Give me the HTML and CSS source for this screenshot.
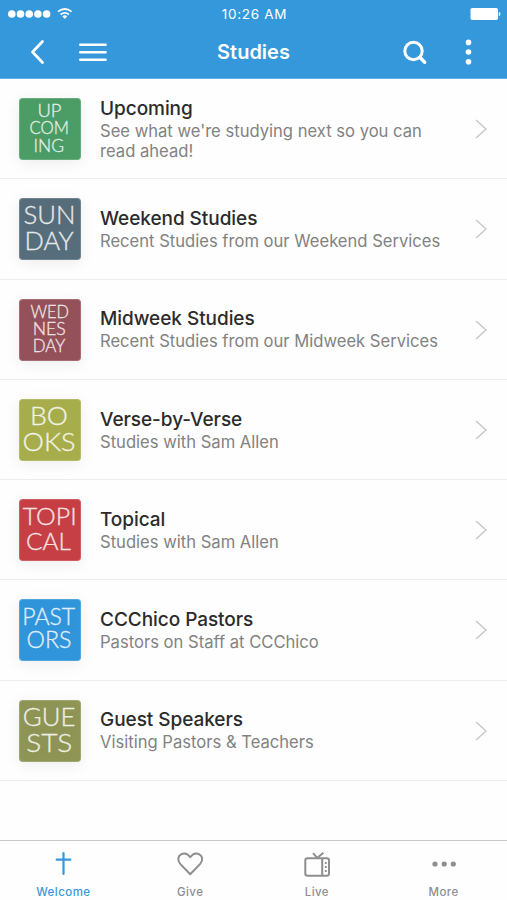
FILE: index.html
```html
<!DOCTYPE html>
<html lang="en">
<head>
<meta charset="utf-8">
<title>Studies</title>
<link rel="stylesheet" href="styles.css">
</head>
<body>
<div class="app">
  <header class="header">
    <div class="status">
      <svg class="signal" width="66" height="14" viewBox="0 0 66 14" fill="#fff"><circle cx="3.8" cy="7" r="3.8"/><circle cx="12.5" cy="7" r="3.8"/><circle cx="21.2" cy="7" r="3.8"/><circle cx="29.9" cy="7" r="3.8"/><circle cx="38.6" cy="7" r="3.8"/><g fill="none" stroke="#fff" stroke-width="1.7"><path d="M50 4.7q6.8-5.4 13.6 0M52.6 7.5q4.2-3.2 8.4 0"/></g><path d="M54.3 9.2q2.5-1.8 5 0l-2.5 2.7z"/></svg>
      <span class="time">10:26 AM</span>
      <svg class="battery" width="31" height="14" viewBox="0 0 31 14" fill="#fff"><rect x="0.5" y="1" width="27.5" height="12" rx="1.8"/><path d="M28.8 4.8q1.7.6 1.7 2.2t-1.7 2.2z"/></svg>
    </div>
    <div class="nav">
      <svg width="120" height="32" viewBox="0 0 120 32" fill="none" stroke="#fff" stroke-width="2.7" stroke-linecap="round" stroke-linejoin="round"><path d="M42.5 5.5 32.5 16l10 10.5"/><path d="M80.3 8.7h25.3M80.3 16.2h25.3M80.3 23.7h25.3" stroke-width="2.6"/></svg>
      <h1>Studies</h1>
      <svg width="120" height="32" viewBox="0 0 120 32"><circle cx="26.5" cy="15" r="8.7" fill="none" stroke="#fff" stroke-width="3"/><path d="m32.8 21.2 4.9 5" stroke="#fff" stroke-width="3.4" stroke-linecap="round"/><g fill="#fff"><circle cx="81.5" cy="6.4" r="2.8"/><circle cx="81.5" cy="16" r="2.8"/><circle cx="81.5" cy="25.8" r="2.8"/></g></svg>
    </div>
  </header>

  <main class="list">
    <a class="row">
      <svg class="tile green" viewBox="0 0 62 62"><text x="18.5" y="18.5" textLength="24" lengthAdjust="spacingAndGlyphs">UP</text><text x="10.5" y="36" textLength="39.5" lengthAdjust="spacingAndGlyphs">COM</text><text x="14.5" y="53.5" textLength="30.5" lengthAdjust="spacingAndGlyphs">ING</text></svg>
      <div class="text"><h2>Upcoming</h2><p>See what we're studying next so you can<br>read ahead!</p></div>
      <svg class="chevron" viewBox="0 0 12 20"><path d="m1 1 10 9-10 9"/></svg>
    </a>
    <a class="row">
      <svg class="tile slate large" viewBox="0 0 62 62"><text x="4.5" y="25.5" textLength="52" lengthAdjust="spacingAndGlyphs">SUN</text><text x="5.5" y="51.7" textLength="49" lengthAdjust="spacingAndGlyphs">DAY</text></svg>
      <div class="text"><h2>Weekend Studies</h2><p>Recent Studies from our Weekend Services</p></div>
      <svg class="chevron" viewBox="0 0 12 20"><path d="m1 1 10 9-10 9"/></svg>
    </a>
    <a class="row">
      <svg class="tile maroon" viewBox="0 0 62 62"><text x="11.5" y="18.5" textLength="38.5" lengthAdjust="spacingAndGlyphs">WED</text><text x="13.7" y="36" textLength="33" lengthAdjust="spacingAndGlyphs">NES</text><text x="13.7" y="53.2" textLength="32.5" lengthAdjust="spacingAndGlyphs">DAY</text></svg>
      <div class="text"><h2>Midweek Studies</h2><p>Recent Studies from our Midweek Services</p></div>
      <svg class="chevron" viewBox="0 0 12 20"><path d="m1 1 10 9-10 9"/></svg>
    </a>
    <a class="row">
      <svg class="tile lime large" viewBox="0 0 62 62"><text x="11" y="25.5" textLength="38" lengthAdjust="spacingAndGlyphs">BO</text><text x="3.5" y="52.2" textLength="53" lengthAdjust="spacingAndGlyphs">OKS</text></svg>
      <div class="text"><h2>Verse-by-Verse</h2><p>Studies with Sam Allen</p></div>
      <svg class="chevron" viewBox="0 0 12 20"><path d="m1 1 10 9-10 9"/></svg>
    </a>
    <a class="row">
      <svg class="tile red medium" viewBox="0 0 62 62"><text x="3.7" y="26" textLength="54" lengthAdjust="spacingAndGlyphs">TOPI</text><text x="7" y="50.5" textLength="45" lengthAdjust="spacingAndGlyphs">CAL</text></svg>
      <div class="text"><h2>Topical</h2><p>Studies with Sam Allen</p></div>
      <svg class="chevron" viewBox="0 0 12 20"><path d="m1 1 10 9-10 9"/></svg>
    </a>
    <a class="row">
      <svg class="tile blue medium" viewBox="0 0 62 62"><text x="3.2" y="26.3" textLength="53" lengthAdjust="spacingAndGlyphs">PAST</text><text x="7.5" y="48.7" textLength="45" lengthAdjust="spacingAndGlyphs">ORS</text></svg>
      <div class="text"><h2>CCChico Pastors</h2><p>Pastors on Staff at CCChico</p></div>
      <svg class="chevron" viewBox="0 0 12 20"><path d="m1 1 10 9-10 9"/></svg>
    </a>
    <a class="row">
      <svg class="tile olive large" viewBox="0 0 62 62"><text x="3.8" y="25.7" textLength="52.5" lengthAdjust="spacingAndGlyphs">GUE</text><text x="7.2" y="52" textLength="46" lengthAdjust="spacingAndGlyphs">STS</text></svg>
      <div class="text"><h2>Guest Speakers</h2><p>Visiting Pastors &amp; Teachers</p></div>
      <svg class="chevron" viewBox="0 0 12 20"><path d="m1 1 10 9-10 9"/></svg>
    </a>
  </main>

  <nav class="tabs">
    <a class="tab active"><svg width="32" height="28" viewBox="0 0 32 28"><path d="M16.5 3v21M9.7 9.7h13.6" stroke-width="2.2" stroke-linecap="round"/></svg><span>Welcome</span></a>
    <a class="tab"><svg width="32" height="28" viewBox="0 0 32 28"><path d="M16.2 24.2 6.4 14.1C2.8 10.1 4.2 5.8 7 4.3c3.2-1.7 6.8-.4 9.2 2.9 2.4-3.3 6-4.6 9.2-2.9 2.8 1.5 4.2 5.8.6 9.8z" stroke-width="2" stroke-linejoin="round"/></svg><span>Give</span></a>
    <a class="tab"><svg width="32" height="28" viewBox="0 0 32 28"><rect x="4.3" y="8.3" width="23.7" height="17.5" rx="2.3" stroke-width="2"/><path d="M21.2 8.3v17.5M12.1 3.2l4.1 4.7 6.2-5.2" stroke-width="2"/><path d="M24.8 12v2M24.8 16v2M24.8 20v2" stroke-width="1.8"/></svg><span>Live</span></a>
    <a class="tab"><svg width="32" height="28" viewBox="0 0 32 28"><g fill="#8e8e8e" stroke="none"><circle cx="7" cy="14" r="2.6"/><circle cx="16.2" cy="14" r="2.6"/><circle cx="25.3" cy="14" r="2.6"/></g></svg><span>More</span></a>
  </nav>
</div>
</body>
</html>
```
FILE: styles.css
```css
* { box-sizing: border-box; }

body {
  margin: 0;
  background: #fefefe;
  font-family: Inter, "Liberation Sans", sans-serif;
}

h1, h2, p { margin: 0; }

svg { display: block; flex: none; }

.app {
  display: flex;
  flex-direction: column;
  width: 507px;
  height: 900px;
}

.header {
  height: 79px;
  background: #3498db;
  color: #fff;
  border-bottom: 1px solid #5bb1e8;
}

.status {
  display: grid;
  grid-template-columns: 1fr auto 1fr;
  align-items: center;
  height: 27px;
  padding: 0 6px 0 8px;
}

.time { font-size: 13.5px; letter-spacing: 0.7px; }

.battery { justify-self: end; }

.nav {
  display: flex;
  align-items: center;
  justify-content: space-between;
  height: 50px;
}

.nav h1 { font-size: 20px; font-weight: 600; line-height: 24px; }

.list { flex: 1; }

.row {
  display: flex;
  align-items: center;
  height: 100.25px;
  padding: 1px 20px 0 19px;
  border-bottom: 1px solid #ebebeb;
}

.tile {
  width: 62px;
  height: 62px;
  margin-right: 19px;
  border-radius: 4px;
  box-shadow: inset 0 0 0 1px rgba(255, 255, 255, 0.16), 0 3px 15px rgba(0, 0, 0, 0.07);
}

.tile text {
  font-family: Lato, sans-serif;
  font-size: 17px;
  font-weight: 300;
  fill: #fff;
  stroke: #fff;
  stroke-width: 0.3px;
  opacity: 0.85;
}

.tile.medium text { font-size: 23px; }
.tile.large text { font-size: 24.5px; }

.green { background: #4b9c65; }
.slate { background: #566d7c; }
.maroon { background: #955159; }
.lime { background: #a6ad4b; }
.red { background: #c63f44; }
.blue { background: #3095da; }
.olive { background: #8e9555; }

.text { flex: 1; }

.text h2 {
  font-size: 19px;
  font-weight: 500;
  line-height: 24px;
  letter-spacing: -0.05px;
  color: #2b2b2b;
}

.text p {
  font-size: 16.6px;
  line-height: 20.5px;
  color: #828282;
  white-space: nowrap;
}

.chevron {
  width: 12px;
  height: 20px;
  fill: none;
  stroke: #c7c7cb;
  stroke-width: 1.4;
}

.tabs {
  display: grid;
  grid-template-columns: repeat(4, 1fr);
  height: 60px;
  border-top: 1px solid #c9c9c9;
}

.tab {
  display: flex;
  flex-direction: column;
  align-items: center;
  padding-top: 9px;
  color: #8e8e8e;
  font-size: 11.5px;
  font-weight: 500;
  line-height: 14px;
  letter-spacing: 0.45px;
}

.tab svg { margin-bottom: 7px; fill: none; stroke: currentColor; }

.tab.active { color: #3498db; }
```
